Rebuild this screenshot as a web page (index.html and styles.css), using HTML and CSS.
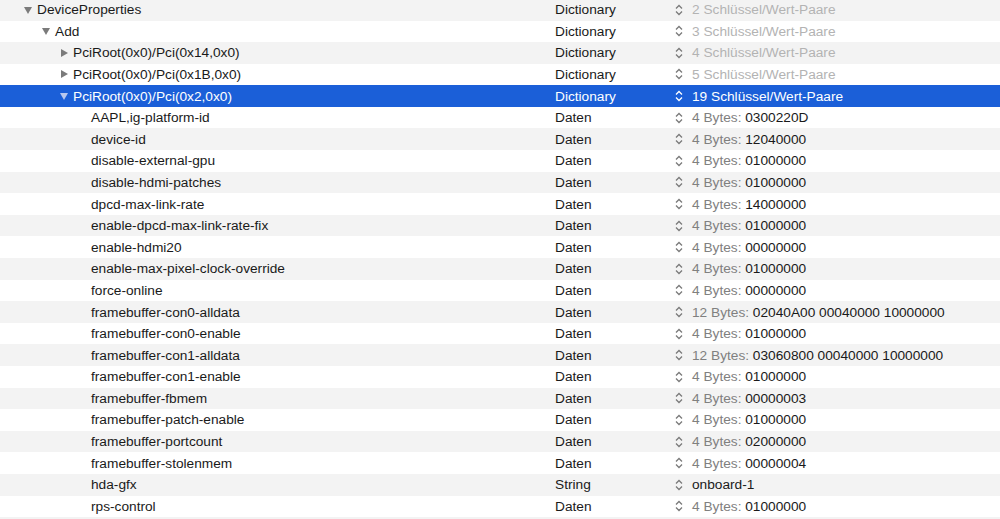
FILE: index.html
```html
<!DOCTYPE html>
<html lang="de">
<head>
    <meta charset="UTF-8">
    <title>DeviceProperties</title>
    <link rel="stylesheet" href="styles.css">
</head>
<body>
    <svg class="defs" width="0" height="0">
        <symbol id="tri-down" viewBox="0 0 8 8"><path d="M0 1 H8 L4 8 Z"/></symbol>
        <symbol id="tri-right" viewBox="0 0 8 8"><path d="M1 0 V8 L8 4 Z"/></symbol>
        <symbol id="stepper" viewBox="0 0 8 12"><path d="M1 4.5 L4 1.5 L7 4.5 M1 7.5 L4 10.5 L7 7.5" fill="none" stroke-width="1.3"/></symbol>
    </svg>

    <div class="outline">
        <div class="row lv0">
            <div class="key"><svg class="tri"><use href="#tri-down"/></svg>DeviceProperties</div>
            <div class="type">Dictionary</div>
            <div class="val"><svg class="step"><use href="#stepper"/></svg><span class="dim">2 Schlüssel/Wert-Paare</span></div>
        </div>
        <div class="row lv1">
            <div class="key"><svg class="tri"><use href="#tri-down"/></svg>Add</div>
            <div class="type">Dictionary</div>
            <div class="val"><svg class="step"><use href="#stepper"/></svg><span class="dim">3 Schlüssel/Wert-Paare</span></div>
        </div>
        <div class="row lv2">
            <div class="key"><svg class="tri"><use href="#tri-right"/></svg>PciRoot(0x0)/Pci(0x14,0x0)</div>
            <div class="type">Dictionary</div>
            <div class="val"><svg class="step"><use href="#stepper"/></svg><span class="dim">4 Schlüssel/Wert-Paare</span></div>
        </div>
        <div class="row lv2">
            <div class="key"><svg class="tri"><use href="#tri-right"/></svg>PciRoot(0x0)/Pci(0x1B,0x0)</div>
            <div class="type">Dictionary</div>
            <div class="val"><svg class="step"><use href="#stepper"/></svg><span class="dim">5 Schlüssel/Wert-Paare</span></div>
        </div>
        <div class="row lv2 selected">
            <div class="key"><svg class="tri"><use href="#tri-down"/></svg>PciRoot(0x0)/Pci(0x2,0x0)</div>
            <div class="type">Dictionary</div>
            <div class="val"><svg class="step"><use href="#stepper"/></svg><span>19 Schlüssel/Wert-Paare</span></div>
        </div>
        <div class="row lv3">
            <div class="key"><span class="tri"></span>AAPL,ig-platform-id</div>
            <div class="type">Daten</div>
            <div class="val"><svg class="step"><use href="#stepper"/></svg><span class="bytes">4 Bytes:</span>&nbsp;0300220D</div>
        </div>
        <div class="row lv3">
            <div class="key"><span class="tri"></span>device-id</div>
            <div class="type">Daten</div>
            <div class="val"><svg class="step"><use href="#stepper"/></svg><span class="bytes">4 Bytes:</span>&nbsp;12040000</div>
        </div>
        <div class="row lv3">
            <div class="key"><span class="tri"></span>disable-external-gpu</div>
            <div class="type">Daten</div>
            <div class="val"><svg class="step"><use href="#stepper"/></svg><span class="bytes">4 Bytes:</span>&nbsp;01000000</div>
        </div>
        <div class="row lv3">
            <div class="key"><span class="tri"></span>disable-hdmi-patches</div>
            <div class="type">Daten</div>
            <div class="val"><svg class="step"><use href="#stepper"/></svg><span class="bytes">4 Bytes:</span>&nbsp;01000000</div>
        </div>
        <div class="row lv3">
            <div class="key"><span class="tri"></span>dpcd-max-link-rate</div>
            <div class="type">Daten</div>
            <div class="val"><svg class="step"><use href="#stepper"/></svg><span class="bytes">4 Bytes:</span>&nbsp;14000000</div>
        </div>
        <div class="row lv3">
            <div class="key"><span class="tri"></span>enable-dpcd-max-link-rate-fix</div>
            <div class="type">Daten</div>
            <div class="val"><svg class="step"><use href="#stepper"/></svg><span class="bytes">4 Bytes:</span>&nbsp;01000000</div>
        </div>
        <div class="row lv3">
            <div class="key"><span class="tri"></span>enable-hdmi20</div>
            <div class="type">Daten</div>
            <div class="val"><svg class="step"><use href="#stepper"/></svg><span class="bytes">4 Bytes:</span>&nbsp;00000000</div>
        </div>
        <div class="row lv3">
            <div class="key"><span class="tri"></span>enable-max-pixel-clock-override</div>
            <div class="type">Daten</div>
            <div class="val"><svg class="step"><use href="#stepper"/></svg><span class="bytes">4 Bytes:</span>&nbsp;01000000</div>
        </div>
        <div class="row lv3">
            <div class="key"><span class="tri"></span>force-online</div>
            <div class="type">Daten</div>
            <div class="val"><svg class="step"><use href="#stepper"/></svg><span class="bytes">4 Bytes:</span>&nbsp;00000000</div>
        </div>
        <div class="row lv3">
            <div class="key"><span class="tri"></span>framebuffer-con0-alldata</div>
            <div class="type">Daten</div>
            <div class="val"><svg class="step"><use href="#stepper"/></svg><span class="bytes">12 Bytes:</span>&nbsp;02040A00 00040000 10000000</div>
        </div>
        <div class="row lv3">
            <div class="key"><span class="tri"></span>framebuffer-con0-enable</div>
            <div class="type">Daten</div>
            <div class="val"><svg class="step"><use href="#stepper"/></svg><span class="bytes">4 Bytes:</span>&nbsp;01000000</div>
        </div>
        <div class="row lv3">
            <div class="key"><span class="tri"></span>framebuffer-con1-alldata</div>
            <div class="type">Daten</div>
            <div class="val"><svg class="step"><use href="#stepper"/></svg><span class="bytes">12 Bytes:</span>&nbsp;03060800 00040000 10000000</div>
        </div>
        <div class="row lv3">
            <div class="key"><span class="tri"></span>framebuffer-con1-enable</div>
            <div class="type">Daten</div>
            <div class="val"><svg class="step"><use href="#stepper"/></svg><span class="bytes">4 Bytes:</span>&nbsp;01000000</div>
        </div>
        <div class="row lv3">
            <div class="key"><span class="tri"></span>framebuffer-fbmem</div>
            <div class="type">Daten</div>
            <div class="val"><svg class="step"><use href="#stepper"/></svg><span class="bytes">4 Bytes:</span>&nbsp;00000003</div>
        </div>
        <div class="row lv3">
            <div class="key"><span class="tri"></span>framebuffer-patch-enable</div>
            <div class="type">Daten</div>
            <div class="val"><svg class="step"><use href="#stepper"/></svg><span class="bytes">4 Bytes:</span>&nbsp;01000000</div>
        </div>
        <div class="row lv3">
            <div class="key"><span class="tri"></span>framebuffer-portcount</div>
            <div class="type">Daten</div>
            <div class="val"><svg class="step"><use href="#stepper"/></svg><span class="bytes">4 Bytes:</span>&nbsp;02000000</div>
        </div>
        <div class="row lv3">
            <div class="key"><span class="tri"></span>framebuffer-stolenmem</div>
            <div class="type">Daten</div>
            <div class="val"><svg class="step"><use href="#stepper"/></svg><span class="bytes">4 Bytes:</span>&nbsp;00000004</div>
        </div>
        <div class="row lv3">
            <div class="key"><span class="tri"></span>hda-gfx</div>
            <div class="type">String</div>
            <div class="val"><svg class="step"><use href="#stepper"/></svg>onboard-1</div>
        </div>
        <div class="row lv3">
            <div class="key"><span class="tri"></span>rps-control</div>
            <div class="type">Daten</div>
            <div class="val"><svg class="step"><use href="#stepper"/></svg><span class="bytes">4 Bytes:</span>&nbsp;01000000</div>
        </div>
        <div class="row lv3 tail"></div>
    </div>
</body>
</html>
```

FILE: styles.css
```css
body {
    margin: 0;
    padding: 0;
    background-color: #fff;
    font-family: "Liberation Sans", Arial, sans-serif;
    font-size: 13.7px;
    color: #1a1a1a;
    overflow: hidden;
}
.defs {
    position: absolute;
}
.outline {
    margin-top: -1.1px;
}
.row {
    display: flex;
    align-items: center;
    height: 21.6px;
    white-space: nowrap;
}
.row:nth-child(odd) {
    background-color: #f3f3f3;
}
.row.selected {
    background-color: #1b5fd8;
    color: #fff;
}
.key {
    display: flex;
    align-items: center;
    width: 555px;
    box-sizing: border-box;
    padding-left: 24px;
}
.lv1 .key { padding-left: 42px; }
.lv2 .key { padding-left: 60px; }
.lv3 .key { padding-left: 78px; }
.tri {
    width: 8px;
    height: 8px;
    margin-right: 5px;
    fill: #7b7b7b;
    flex-shrink: 0;
}
.selected .tri {
    fill: #b8c8ee;
}
.type {
    width: 120px;
}
.val {
    display: flex;
    align-items: center;
}
.step {
    width: 8px;
    height: 12px;
    margin-right: 9px;
    stroke: #7a7a7a;
}
.selected .step {
    stroke: #fff;
}
.dim {
    color: #b3b3b3;
}
.bytes {
    color: #808080;
}
```
